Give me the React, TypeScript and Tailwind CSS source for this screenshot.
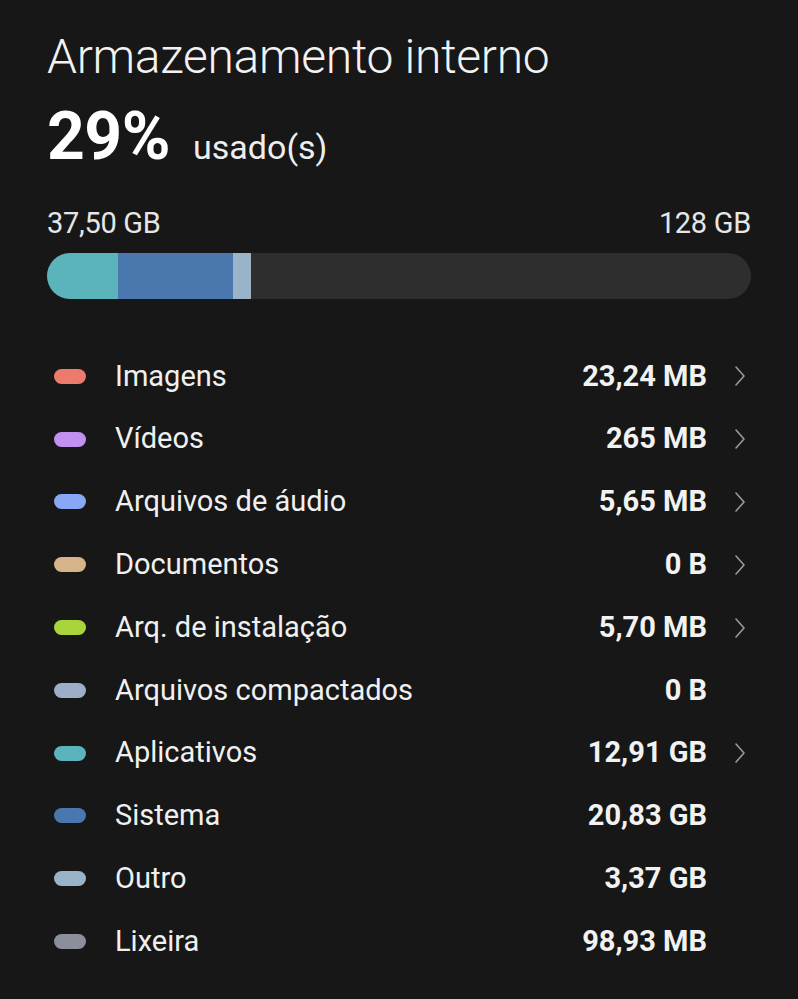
import React from 'react';

type Item = {
  label: string;
  value: string;
  color: string;
  arrow: boolean;
};

const items: Item[] = [
  { label: 'Imagens', value: '23,24 MB', color: 'bg-[#ec7b6b]', arrow: true },
  { label: 'Vídeos', value: '265 MB', color: 'bg-[#c190f0]', arrow: true },
  { label: 'Arquivos de áudio', value: '5,65 MB', color: 'bg-[#88a8f5]', arrow: true },
  { label: 'Documentos', value: '0 B', color: 'bg-[#d5b489]', arrow: true },
  { label: 'Arq. de instalação', value: '5,70 MB', color: 'bg-[#a9d53c]', arrow: true },
  { label: 'Arquivos compactados', value: '0 B', color: 'bg-[#9caec8]', arrow: false },
  { label: 'Aplicativos', value: '12,91 GB', color: 'bg-[#5bb4bc]', arrow: true },
  { label: 'Sistema', value: '20,83 GB', color: 'bg-[#4a77ae]', arrow: false },
  { label: 'Outro', value: '3,37 GB', color: 'bg-[#99b4c9]', arrow: false },
  { label: 'Lixeira', value: '98,93 MB', color: 'bg-[#8b8e9b]', arrow: false },
];

function Chevron() {
  return (
    <svg width="14" height="22" viewBox="0 0 14 22" fill="none" className="text-[#9a9a9a]">
      <path d="M3 2 L11 11 L3 20" stroke="currentColor" strokeWidth="1.6" strokeLinecap="round" strokeLinejoin="round" />
    </svg>
  );
}

export default function App() {
  return (
    <div className="w-[798px] h-[999px] bg-[#171717] text-white overflow-hidden font-['Roboto','Liberation_Sans',sans-serif]">
      <div className="px-[47px] pt-[28px]">
        {/* Header */}
        <h1 className="text-[48px] font-light leading-[58px] tracking-[-0.3px] text-[#f2f2f2]">Armazenamento interno</h1>
        <div className="flex items-baseline mt-[18px] h-[66px]">
          <span className="text-[66px] font-bold leading-[66px] tracking-[-0.5px]">29%</span>
          <span className="text-[34px] font-normal ml-[23px] text-[#eeeeee]">usado(s)</span>
        </div>

        {/* Totals */}
        <div className="flex justify-between mt-[36px] text-[29px] leading-[34px] text-[#e6e6e6] tracking-[-0.3px]">
          <span>37,50 GB</span>
          <span>128 GB</span>
        </div>

        {/* Bar */}
        <div className="mt-[13px] h-[46px] w-[704px] rounded-full bg-[#2e2e2e] overflow-hidden flex">
          <div className="w-[71px] bg-[#5bb4bc]" />
          <div className="w-[115px] bg-[#4a77ae]" />
          <div className="w-[18px] bg-[#99b4c9]" />
        </div>

        {/* Categories */}
        <div className="mt-[46px] flex flex-col">
          {items.map((item) => (
            <div key={item.label} className="flex items-center h-[62.8px]">
              <div className={`w-[32px] h-[15px] rounded-full ml-[7px] ${item.color}`} />
              <span className="ml-[29px] text-[29px] text-[#f0f0f0] flex-1">{item.label}</span>
              <span className="text-[29px] font-bold text-[#f2f2f2]">{item.value}</span>
              <div className="w-[44px] flex justify-end pr-[4px]">
                {item.arrow && <Chevron />}
              </div>
            </div>
          ))}
        </div>
      </div>
    </div>
  );
}
